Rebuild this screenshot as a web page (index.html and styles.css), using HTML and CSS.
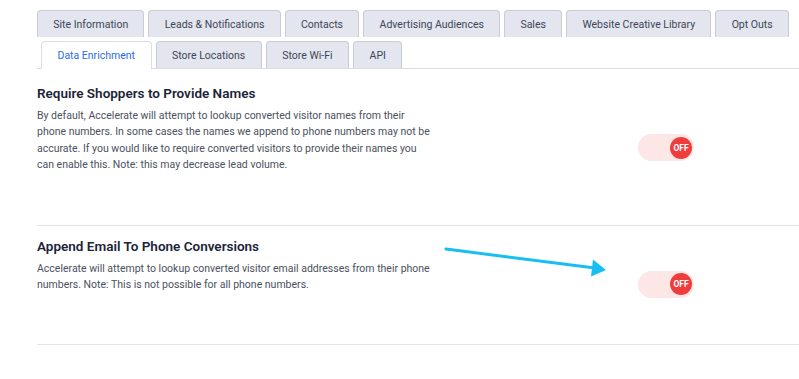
FILE: index.html
```html
<!DOCTYPE html>
<html lang="en">
<head>
    <meta charset="UTF-8" />
    <title>Settings - Data Enrichment</title>
    <link rel="stylesheet" href="styles.css">
</head>
<body>

    <nav class="tabs">
        <ul class="tab-row">
            <li class="tab">Site Information</li>
            <li class="tab">Leads &amp; Notifications</li>
            <li class="tab">Contacts</li>
            <li class="tab">Advertising Audiences</li>
            <li class="tab">Sales</li>
            <li class="tab">Website Creative Library</li>
            <li class="tab">Opt Outs</li>
        </ul>
        <ul class="tab-row inner">
            <li class="tab active">Data Enrichment</li>
            <li class="tab">Store Locations</li>
            <li class="tab">Store Wi-Fi</li>
            <li class="tab">API</li>
        </ul>
    </nav>

    <div class="setting">
        <div class="setting-text">
            <h2>Require Shoppers to Provide Names</h2>
            <p>By default, Accelerate will attempt to lookup converted visitor names from their phone numbers. In some cases the names we append to phone numbers may not be accurate. If you would like to require converted visitors to provide their names you can enable this. Note: this may decrease lead volume.</p>
        </div>
        <div class="toggle"><span class="knob">OFF</span></div>
    </div>

    <div class="setting">
        <div class="setting-text">
            <h2>Append Email To Phone Conversions</h2>
            <p>Accelerate will attempt to lookup converted visitor email addresses from their phone numbers. Note: This is not possible for all phone numbers.</p>
        </div>
        <div class="toggle"><span class="knob">OFF</span></div>
    </div>

    <!-- annotation arrow drawn over the page -->
    <svg class="arrow" width="799" height="379" viewBox="0 0 799 379">
        <line x1="446" y1="249" x2="595" y2="268" stroke="#17bef2" stroke-width="3" stroke-linecap="round" />
        <polygon points="606,270 593,259.5 591,276.5" fill="#17bef2" />
    </svg>

</body>
</html>
```

FILE: styles.css
```css
* {
    box-sizing: border-box;
    margin: 0;
    padding: 0;
}

body {
    font-family: Roboto, sans-serif;
    background: #fff;
    color: #1b2437;
    padding: 10px 0 0 37px;
    position: relative;
}

.tabs {
    display: flex;
    flex-direction: column;
    gap: 4px;
    margin-bottom: 4px;
}

.tab-row {
    list-style: none;
    display: flex;
    gap: 4px;
}

.tab-row.inner {
    padding-left: 4px;
    border-bottom: 1px solid #d9dde4;
}

.tab {
    height: 27px;
    padding: 0 15.25px;
    display: flex;
    align-items: center;
    font-size: 10.5px;
    color: #3e4556;
    background: #e3e6ee;
    border: 1px solid #c8ccd6;
    border-bottom: none;
    border-radius: 4px 4px 0 0;
}

.tab-row.inner .tab {
    padding: 0 15.5px;
}

.tab.active {
    height: 28px;
    margin-bottom: -1px;
    background: #fff;
    color: #2a6ee6;
    border-color: #d9dde4;
}

.setting {
    display: flex;
    align-items: center;
    padding: 10px 0 12px;
    border-bottom: 1px solid #e1e4ea;
}

.setting-text {
    width: 396px;
    padding-bottom: 39px;
}

h2 {
    font-size: 13.5px;
    font-weight: 600;
    line-height: 20px;
    margin-bottom: 5px;
}

p {
    font-size: 10.5px;
    line-height: 16.4px;
    color: #4a5160;
}

.toggle {
    margin-left: 205px;
    width: 56px;
    height: 27px;
    border-radius: 14px;
    background: #fce6e6;
    display: flex;
    align-items: center;
    justify-content: flex-end;
    padding-right: 2px;
}

.knob {
    width: 22px;
    height: 22px;
    border-radius: 50%;
    background: #f13c3c;
    color: #fff;
    font-size: 8.5px;
    font-weight: 700;
    display: flex;
    align-items: center;
    justify-content: center;
}

.arrow {
    position: absolute;
    top: 0;
    left: 0;
    pointer-events: none;
}
```
